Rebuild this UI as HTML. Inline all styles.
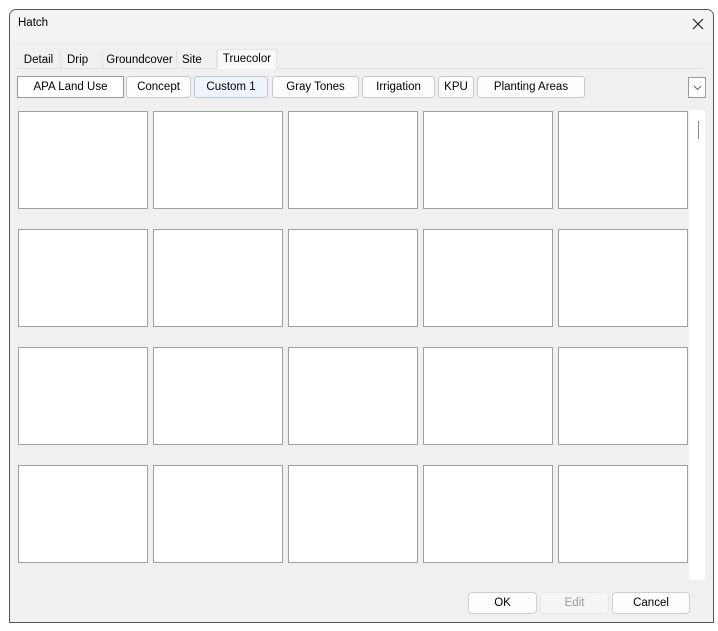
<!DOCTYPE html>
<html><head><style>
body{margin:0;width:718px;height:631px;background:#fff;position:relative;overflow:hidden;font-family:"Liberation Sans",sans-serif;font-size:11.5px;color:#000}
.a{position:absolute;box-sizing:border-box}
.win{left:9px;top:9px;width:705px;height:614px;background:#f0f0f0;border:1px solid #555;border-radius:7px 7px 0 0;overflow:hidden}
.tb{left:0;top:0;width:100%;height:31px;background:#f3f3f3}
.tab{top:51px;height:18px;line-height:18px;text-align:center;border-right:1px solid #e3e3e3}
.btn{top:76px;height:22px;line-height:20px;text-align:center;border:1px solid #c8c8c8;border-radius:3px;background:#fdfdfd}
.cell{width:130px;height:98px;background:#fff;border:1px solid #a0a0a0}
.bb{top:592px;height:22px;line-height:20px;text-align:center;border:1px solid #cfcfcf;border-radius:4px;background:#fdfdfd}
</style></head><body>
<div class="a win"><div class="a tb"></div></div>
<div class="a" style="left:18px;top:17px">Hatch</div>
<svg class="a" style="left:692px;top:18px" width="12" height="12"><path d="M1 1L11 11M11 1L1 11" stroke="#222" stroke-width="1.2"/></svg>
<div class="a" style="left:17px;top:68px;width:686px;height:1px;background:#e0e0e0"></div>
<div class="a tab" style="left:17px;width:44px">Detail</div>
<div class="a tab" style="left:61px;width:42px;text-align:left;padding-left:6px">Drip</div>
<div class="a tab" style="left:103px;width:74px">Groundcover</div>
<div class="a tab" style="left:177px;width:40px;text-align:left;padding-left:5px">Site</div>
<div class="a tab" style="left:217px;top:49px;height:20px;width:60px;background:#f9f9f9;border:1px solid #e3e3e3;border-bottom:none">Truecolor</div>
<div class="a btn" style="left:17px;width:107px;border-color:#9a9a9a;border-radius:0;background:#fff">APA Land Use</div>
<div class="a btn" style="left:126px;width:65px">Concept</div>
<div class="a btn" style="left:194px;width:74px;background:#eef4fa;border-color:#b5c8dc">Custom 1</div>
<div class="a btn" style="left:272px;width:87px">Gray Tones</div>
<div class="a btn" style="left:362px;width:73px">Irrigation</div>
<div class="a btn" style="left:438px;width:36px">KPU</div>
<div class="a btn" style="left:477px;width:108px">Planting Areas</div>
<div class="a" style="left:688px;top:77px;width:18px;height:21px;border:1px solid #9a9a9a;background:#fff"></div>
<svg class="a" style="left:693px;top:85px" width="9" height="6"><path d="M1 1L4.5 4.5L8 1" stroke="#666" fill="none"/></svg>
<div class="a" style="left:689px;top:110px;width:16px;height:470px;background:#fff"></div>
<div class="a" style="left:698px;top:121px;width:1px;height:18px;background:#888"></div>
<div class="a cell" style="left:18px;top:111px"></div><div class="a cell" style="left:153px;top:111px"></div><div class="a cell" style="left:288px;top:111px"></div><div class="a cell" style="left:423px;top:111px"></div><div class="a cell" style="left:558px;top:111px"></div>
<div class="a cell" style="left:18px;top:229px"></div><div class="a cell" style="left:153px;top:229px"></div><div class="a cell" style="left:288px;top:229px"></div><div class="a cell" style="left:423px;top:229px"></div><div class="a cell" style="left:558px;top:229px"></div>
<div class="a cell" style="left:18px;top:347px"></div><div class="a cell" style="left:153px;top:347px"></div><div class="a cell" style="left:288px;top:347px"></div><div class="a cell" style="left:423px;top:347px"></div><div class="a cell" style="left:558px;top:347px"></div>
<div class="a cell" style="left:18px;top:465px"></div><div class="a cell" style="left:153px;top:465px"></div><div class="a cell" style="left:288px;top:465px"></div><div class="a cell" style="left:423px;top:465px"></div><div class="a cell" style="left:558px;top:465px"></div>
<div class="a bb" style="left:468px;width:69px">OK</div>
<div class="a bb" style="left:540px;width:69px;color:#9a9a9a;background:#f5f5f5;border-color:#e8e8e8">Edit</div>
<div class="a bb" style="left:612px;width:78px">Cancel</div>
</body></html>
